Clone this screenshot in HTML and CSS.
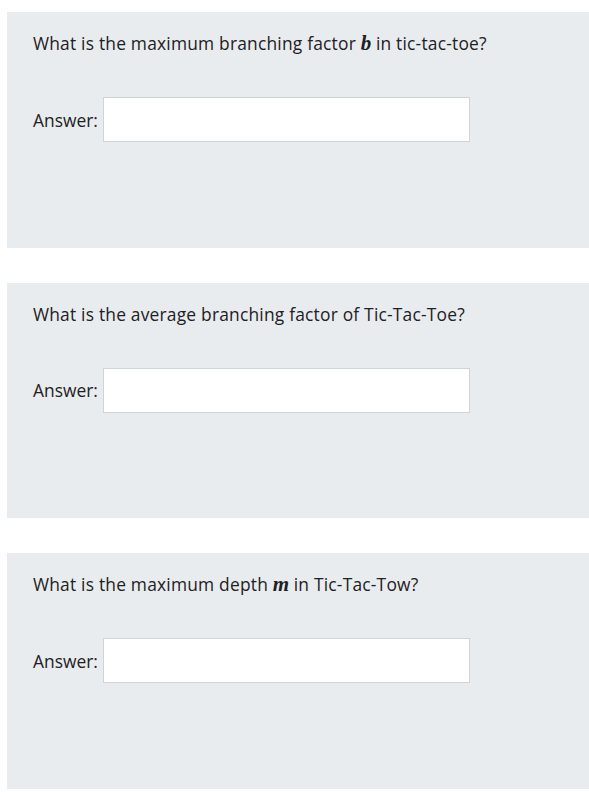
FILE: index.html
```html
<!DOCTYPE html>
<html>
<head>
<meta charset="utf-8">
<link rel="stylesheet" href="styles.css">
</head>
<body>
<div class="quiz">
  <div class="card">
    <div class="qtext">What is the maximum branching factor <span class="math">b</span> in tic-tac-toe?</div>
    <div class="answer"><label>Answer:</label><input type="text" class="field"></div>
  </div>
  <div class="card">
    <div class="qtext">What is the average branching factor of Tic-Tac-Toe?</div>
    <div class="answer"><label>Answer:</label><input type="text" class="field"></div>
  </div>
  <div class="card">
    <div class="qtext">What is the maximum depth <span class="math">m</span> in Tic-Tac-Tow?</div>
    <div class="answer"><label>Answer:</label><input type="text" class="field"></div>
  </div>
</div>
</body>
</html>
```
FILE: styles.css
```css
html, body {
  margin: 0;
  padding: 0;
  background: #ffffff;
}
body {
  font-family: "Open Sans", "Noto Sans", sans-serif;
  font-size: 17.4px;
  color: #1d2125;
}
.quiz {
  padding: 12px 0 0 7px;
  display: flex;
  flex-direction: column;
  gap: 35px;
}
.card {
  background: #e9ecee;
  height: 235.5px;
  box-sizing: border-box;
  padding: 18px 26px 0 26px;
}
.qtext {
  line-height: 26px;
  letter-spacing: 0.2px;
}
.math {
  font-family: "Liberation Serif", "DejaVu Serif", serif;
  font-style: italic;
  font-weight: bold;
  font-size: 21px;
  letter-spacing: 0;
}
.answer {
  margin-top: 41px;
  display: flex;
  align-items: center;
  gap: 5px;
}
.field {
  width: 367px;
  height: 45px;
  box-sizing: border-box;
  border: 1px solid #ced4da;
  background: #fff;
  margin: 0;
  padding: 0 10px;
  font: inherit;
}
```
